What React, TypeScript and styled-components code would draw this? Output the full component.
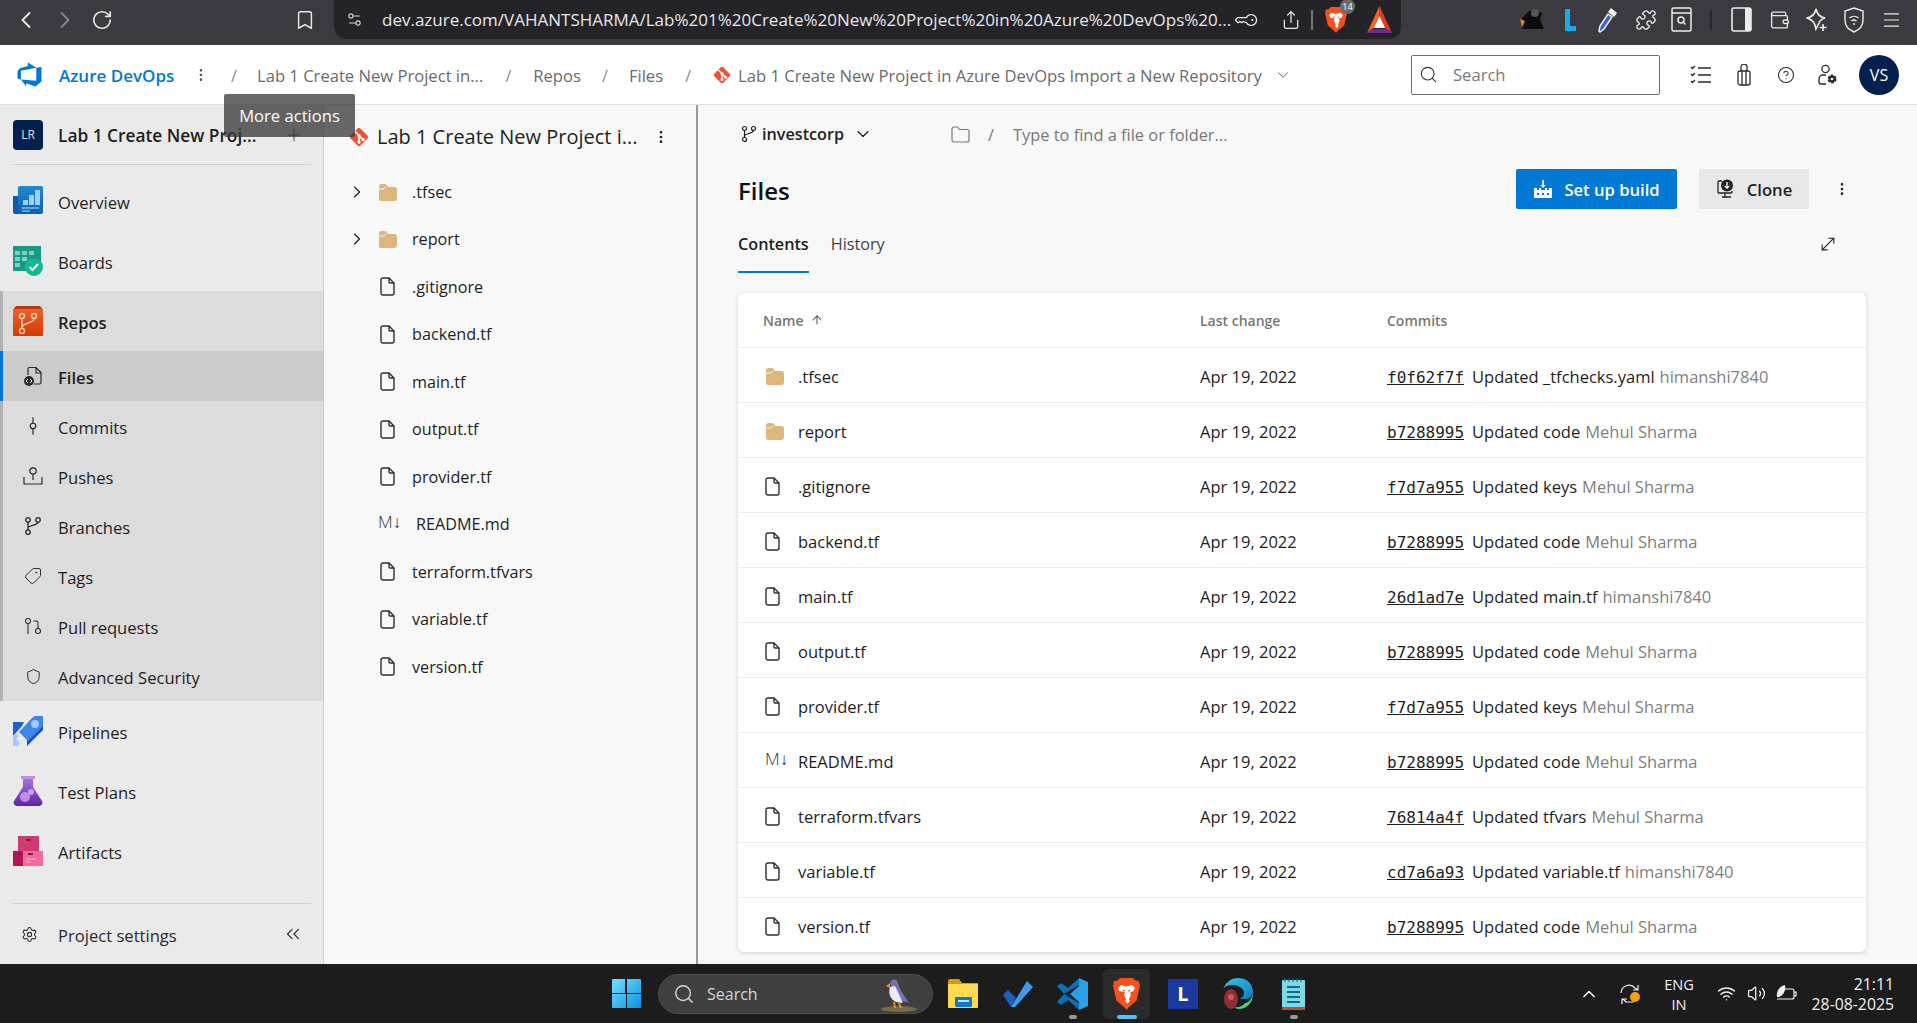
import React from "react";
import styled, { createGlobalStyle } from "styled-components";
import {
  ArrowUp,
  Bookmark,
  ChevronDown,
  ChevronLeft,
  ChevronRight,
  ChevronUp,
  ChevronsLeft,
  CircleHelp,
  EllipsisVertical,
  GitCommitVertical,
  GitPullRequest,
  KeyRound,
  Menu,
  MoveDiagonal,
  Plus,
  Puzzle,
  RotateCw,
  Search,
  Settings,
  Settings2,
  Share,
  Shield,
  Tag,
  Volume2,
  Wallet,
  Wifi,
} from "lucide-react";

const FONT = `"Open Sans", "Noto Sans", "Liberation Sans", sans-serif`;
const TEXT = "16.6px";

const GlobalStyle = createGlobalStyle`
  html, body { margin: 0; padding: 0; background: #fff; }
  body { font-family: ${FONT}; color: #1e1e1e; overflow: hidden; }
  * { box-sizing: border-box; }
`;

const Page = styled.div`
  width: 1917px;
  height: 1023px;
  display: flex;
  flex-direction: column;
  overflow: hidden;
  position: relative;
`;

/* browser chrome */
const BrowserBar = styled.div`
  height: 45px;
  flex: none;
  background: #3a3a40;
  display: flex;
  align-items: flex-start;
  color: #e4e4e6;
`;
const ChromeSlot = styled.div<{ $w: number; $dim?: boolean; $ml?: number }>`
  width: ${(p) => p.$w}px;
  height: 39px;
  flex: none;
  margin-left: ${(p) => p.$ml ?? 0}px;
  display: flex;
  align-items: center;
  justify-content: center;
  color: ${(p) => (p.$dim ? "#85858a" : "#e8e8ea")};
`;
const UrlPill = styled.div`
  width: 1067px;
  height: 39px;
  margin-left: 12px;
  flex: none;
  background: #232328;
  border-radius: 0 0 12px 12px;
  display: flex;
  align-items: center;
  padding-left: 12px;
`;
const UrlText = styled.div`
  width: 854px;
  margin-left: 19px;
  font-size: 17px;
  white-space: nowrap;
  overflow: hidden;
  color: #e8e8ea;
`;
const ChromeSep = styled.div<{ $ml: number; $mr: number; $dark?: boolean }>`
  width: 2px;
  height: 20px;
  margin: 0 ${(p) => p.$mr}px 0 ${(p) => p.$ml}px;
  align-self: center;
  background: ${(p) => (p.$dark ? "#27272b" : "#77777c")};
  flex: none;
`;
const ChromeSepTop = styled(ChromeSep)`
  margin-top: 10px;
  align-self: flex-start;
`;
const ExtBadge = styled.span`
  position: absolute;
  top: -6px;
  right: -8px;
  width: 15px;
  height: 15px;
  border-radius: 50%;
  background: #6a6a72;
  color: #fff;
  font-size: 9px;
  line-height: 15px;
  text-align: center;
`;
const BraveWrap = styled.div`
  position: relative;
  display: flex;
  margin-left: 3px;
`;
const TiltedKey = styled(KeyRound)`
  transform: rotate(45deg);
`;

/* azure devops header */
const Header = styled.div`
  height: 60px;
  flex: none;
  background: #fff;
  border-bottom: 1px solid #e2e2e2;
  display: flex;
  align-items: center;
  padding-left: 16px;
  position: relative;
`;
const Brand = styled.span`
  color: #0078d4;
  font-weight: 600;
  font-size: 17px;
  margin-left: 16px;
  width: 129px;
  padding-top: 2px;
  white-space: nowrap;
`;
const Crumb = styled.span<{ $ml?: number }>`
  color: #6b6b6b;
  font-size: ${TEXT};
  margin-left: ${(p) => p.$ml ?? 0}px;
  padding-top: 2px;
  white-space: nowrap;
`;
const CrumbSlash = styled.span<{ $w: number; $ml?: number }>`
  width: ${(p) => p.$w}px;
  margin-left: ${(p) => p.$ml ?? 0}px;
  color: #8a8a8a;
  font-size: 16px;
  padding-top: 2px;
  text-align: center;
  flex: none;
`;
const SearchBox = styled.div`
  width: 249px;
  height: 40px;
  margin-left: auto;
  border: 1px solid #6e6e6e;
  border-radius: 2px;
  display: flex;
  align-items: center;
  padding-left: 7px;
  gap: 15px;
  color: #7a7a7a;
  font-size: ${TEXT};
`;
const HeaderTools = styled.div`
  display: flex;
  align-items: center;
  margin-left: 19px;
  margin-right: 18px;
  color: #2a2a2a;
`;
const ToolSlot = styled.div<{ $w: number; $ml?: number; $color?: string }>`
  width: ${(p) => p.$w}px;
  margin-left: ${(p) => p.$ml ?? 0}px;
  color: ${(p) => p.$color ?? "inherit"};
  display: flex;
  justify-content: center;
`;
const Avatar = styled.div`
  width: 40px;
  height: 40px;
  border-radius: 50%;
  background: #03204f;
  color: #fff;
  font-size: 16px;
  display: flex;
  align-items: center;
  justify-content: center;
  margin-left: 10px;
`;
const Tooltip = styled.div`
  position: absolute;
  left: 224px;
  top: 49px;
  width: 131px;
  height: 43px;
  background: rgba(55, 55, 55, 0.76);
  border-radius: 2px;
  color: #fff;
  font-size: ${TEXT};
  display: flex;
  align-items: center;
  justify-content: center;
  z-index: 5;
`;

/* main columns */
const Body = styled.div`
  flex: 1;
  min-height: 0;
  display: flex;
`;
const Sidebar = styled.nav`
  width: 324px;
  flex: none;
  background: #eaeaea;
  border-right: 1px solid #cfcfcf;
  display: flex;
  flex-direction: column;
`;
const ProjectHead = styled.div`
  height: 60px;
  margin: 0 12px;
  border-bottom: 1px solid #d2d2d2;
  display: flex;
  align-items: center;
  flex: none;
`;
const ProjectBadge = styled.div`
  width: 30px;
  height: 30px;
  margin-left: 1px;
  border-radius: 4px;
  background: #03204f;
  color: #dfe6f0;
  font-size: 12px;
  display: flex;
  align-items: center;
  justify-content: center;
`;
const ProjectName = styled.div`
  margin-left: 15px;
  padding-top: 2px;
  font-weight: 600;
  font-size: 17.3px;
  width: 226px;
  white-space: nowrap;
`;
const PlusSlot = styled.div`
  display: flex;
  color: #555;
`;
const NavList = styled.div`
  padding-top: 6px;
`;
const NavRow = styled.div<{ $bold?: boolean }>`
  height: 60px;
  display: flex;
  align-items: center;
  padding-left: 13px;
  gap: 15px;
  font-size: ${TEXT};
  font-weight: ${(p) => (p.$bold ? 600 : 400)};
`;
const NavLabel = styled.span`
  padding-top: 3px;
`;
const RepoSection = styled.div`
  background: #dcdcdc;
  border-left: 3px solid #b2b2b2;
`;
const RepoHead = styled(NavRow)`
  padding-left: 10px;
`;
const SubRow = styled.div<{ $active?: boolean }>`
  height: 50px;
  margin-left: ${(p) => (p.$active ? -3 : 0)}px;
  display: flex;
  align-items: center;
  font-size: ${TEXT};
  font-weight: ${(p) => (p.$active ? 600 : 400)};
  background: ${(p) => (p.$active ? "#cccccc" : "transparent")};
  border-left: ${(p) => (p.$active ? "3px solid #0078d4" : "none")};
`;
const SubIcon = styled.div`
  width: 55px;
  padding-left: 10px;
  padding-right: 5px;
  flex: none;
  display: flex;
  justify-content: center;
  color: #2a2a2a;
`;
const FlippedTag = styled(Tag)`
  transform: scaleX(-1);
`;
const SettingsWrap = styled.div`
  margin: auto 12px 0;
  height: 61px;
  border-top: 1px solid #d2d2d2;
  display: flex;
  align-items: center;
  font-size: ${TEXT};
  flex: none;
  color: #2a2a2a;
`;
const SettingsIcon = styled.div`
  width: 46px;
  padding-left: 9px;
  display: flex;
`;
const CollapseIcon = styled.div`
  margin-left: auto;
  margin-right: 7px;
  display: flex;
`;

/* file tree */
const TreePane = styled.div`
  width: 374px;
  flex: none;
  background: #f8f8f8;
  border-right: 2px solid #999;
`;
const TreeTitle = styled.div`
  height: 63px;
  display: flex;
  align-items: center;
  padding-left: 25px;
`;
const TreeTitleText = styled.div`
  margin-left: 8px;
  font-size: 20px;
  width: 276px;
  white-space: nowrap;
`;
const TreeRow = styled.div`
  height: 47.5px;
  display: flex;
  align-items: center;
  font-size: 16.2px;
`;
const TreeChevron = styled.div`
  width: 54px;
  padding-left: 23px;
  display: flex;
  flex: none;
`;
const TreeIcon = styled.div<{ $w?: number; $pl?: number }>`
  width: ${(p) => p.$w ?? 34}px;
  padding-left: ${(p) => p.$pl ?? 0}px;
  flex: none;
  display: flex;
`;
const MdGlyph = styled.span`
  font-size: 17px;
  font-weight: 300;
  line-height: 16px;
  padding-bottom: 4px;
  color: #333;
  white-space: nowrap;
`;

/* right pane */
const Main = styled.main`
  flex: 1;
  min-width: 0;
  background: #f8f8f8;
  padding: 0 51px 0 40px;
`;
const BranchRow = styled.div`
  height: 58px;
  display: flex;
  align-items: center;
  padding-left: 2px;
`;
const BranchName = styled.span`
  font-weight: 600;
  font-size: 16.2px;
  margin-left: 4px;
  width: 91px;
  white-space: nowrap;
`;
const PathBox = styled.div`
  display: flex;
  align-items: center;
  margin-left: 78px;
  color: #777;
  font-size: 16.4px;
`;
const PathSlash = styled.span`
  margin: 0 19px 0 18px;
  color: #777;
`;
const TitleRow = styled.div`
  height: 40px;
  margin-top: 6px;
  display: flex;
  align-items: center;
`;
const PageTitle = styled.h1`
  margin: 0;
  padding-top: 3px;
  font-size: 24px;
  font-weight: 600;
  color: #111;
`;
const PrimaryButton = styled.button`
  margin-left: auto;
  width: 161px;
  height: 40px;
  border: none;
  border-radius: 2px;
  background: #0078d4;
  color: #fff;
  font-family: ${FONT};
  font-weight: 600;
  font-size: ${TEXT};
  display: flex;
  align-items: center;
  justify-content: center;
  gap: 11px;
`;
const SecondaryButton = styled.button`
  margin-left: 22px;
  width: 110px;
  height: 40px;
  border: none;
  border-radius: 2px;
  background: #e8e8e8;
  color: #222;
  font-family: ${FONT};
  font-weight: 600;
  font-size: ${TEXT};
  display: flex;
  align-items: center;
  justify-content: center;
  gap: 11px;
`;
const KebabSlot = styled.div`
  width: 57px;
  padding-left: 25px;
  display: flex;
  color: #222;
`;
const Tabs = styled.div`
  height: 46px;
  margin-top: 18px;
  display: flex;
  align-items: flex-start;
  font-size: 16.2px;
`;
const TabItem = styled.div<{ $active?: boolean }>`
  height: 46px;
  padding-top: 6px;
  margin-right: 22px;
  font-weight: ${(p) => (p.$active ? 600 : 400)};
  color: ${(p) => (p.$active ? "#1e1e1e" : "#444")};
  border-bottom: 2px solid ${(p) => (p.$active ? "#0078d4" : "transparent")};
`;
const ExpandSlot = styled.div`
  margin-left: auto;
  margin-right: 28px;
  margin-top: 7px;
  display: flex;
  color: #222;
`;
const Card = styled.div`
  margin-top: 20px;
  background: #fff;
  border-radius: 6px;
  box-shadow: 0 1px 4px rgba(0, 0, 0, 0.16);
`;
const CardRow = styled.div<{ $head?: boolean }>`
  height: ${(p) => (p.$head ? 54 : 55)}px;
  display: grid;
  grid-template-columns: 437px 187px 1fr;
  align-items: center;
  padding-left: 25px;
  padding-top: ${(p) => (p.$head ? 0 : 2)}px;
  border-top: ${(p) => (p.$head ? "none" : "1px solid #ededed")};
  font-size: ${(p) => (p.$head ? "14px" : "16.5px")};
  font-weight: ${(p) => (p.$head ? 600 : 400)};
  color: ${(p) => (p.$head ? "#777" : "#1e1e1e")};
`;
const NameCell = styled.div`
  display: flex;
  align-items: center;
`;
const RowIcon = styled.div`
  width: 35px;
  flex: none;
  display: flex;
  padding-left: 2px;
`;
const SortArrow = styled.span`
  display: flex;
  margin-left: 6px;
  color: #555;
`;
const CommitCell = styled.div`
  display: flex;
  align-items: baseline;
  white-space: nowrap;
`;
const CommitHash = styled.span`
  font-family: "DejaVu Sans Mono", "Liberation Mono", monospace;
  font-size: 16px;
  text-decoration: underline;
  margin-right: 8px;
`;
const CommitAuthor = styled.span`
  color: #808080;
  margin-left: 5px;
`;

/* taskbar */
const Taskbar = styled.div`
  height: 59px;
  flex: none;
  background: #1c1c1c;
  display: flex;
  align-items: center;
  padding-left: 612px;
  color: #fff;
`;
const TaskSearch = styled.div`
  width: 275px;
  height: 40px;
  margin-left: 17px;
  margin-right: 15px;
  border-radius: 20px;
  background: #3f3f3f;
  border: 1px solid #4c4c4c;
  display: flex;
  align-items: center;
  padding-left: 14px;
  gap: 12px;
  color: #d6d6d6;
  font-size: 16px;
  position: relative;
`;
const PuffinSlot = styled.div`
  position: absolute;
  right: 12px;
  top: 3px;
  display: flex;
`;
const TaskSlot = styled.div<{ $w: number; $ml?: number; $active?: boolean; $dot?: boolean }>`
  width: ${(p) => p.$w}px;
  margin-left: ${(p) => p.$ml ?? 0}px;
  height: 50px;
  flex: none;
  display: flex;
  align-items: center;
  justify-content: center;
  position: relative;
  border-radius: 5px;
  background: ${(p) => (p.$active ? "#2a2a2a" : "transparent")};
  &::after {
    content: "";
    display: ${(p) => (p.$dot || p.$active ? "block" : "none")};
    position: absolute;
    bottom: 0;
    left: 50%;
    transform: translateX(-50%);
    width: ${(p) => (p.$active ? 20 : 8)}px;
    height: 4px;
    border-radius: 2px;
    background: ${(p) => (p.$active ? "#4cc2ff" : "#9a9a9a")};
  }
`;
const Tray = styled.div`
  margin-left: auto;
  margin-right: 23px;
  display: flex;
  align-items: center;
  color: #f2f2f2;
`;
const TrayLang = styled.div`
  width: 30px;
  margin: 0 22px 0 23px;
  text-align: center;
  font-size: 14.6px;
  line-height: 20px;
`;
const TrayClock = styled.div`
  width: 97px;
  text-align: right;
  font-size: 15.8px;
  line-height: 20px;
`;
const TrayIcon = styled.div<{ $w: number; $ml?: number }>`
  width: ${(p) => p.$w}px;
  margin-left: ${(p) => p.$ml ?? 0}px;
  display: flex;
  justify-content: center;
`;
const LBlue = styled.div`
  width: 30px;
  height: 30px;
  background: #1b3aa0;
  color: #fff;
  font-weight: 700;
  font-size: 20px;
  display: flex;
  align-items: center;
  justify-content: center;
`;

/* inline drawings */
const AzureLogo = () => (
  <svg width="27" height="27" viewBox="0 0 18 18">
    <path fill="#0078d4" d="M17 4v9.74l-4 3.28-6.2-2.26V17L3.29 12.41l10.23.8V4.44zm-3.41.49L7.85 1v2.29L2.58 4.84 1 6.87v4.61l2.26 1V6.57z" />
  </svg>
);
const GitMark = ({ size = 18 }: { size?: number }) => (
  <svg width={size} height={size} viewBox="0 0 20 20">
    <rect x="3" y="3" width="14" height="14" rx="2" transform="rotate(45 10 10)" fill="#f05133" />
    <path d="M6 4.5 14 12.5M10 8.5v6" stroke="#fff" strokeWidth="1.5" fill="none" />
    <circle cx="10" cy="15" r="1.7" fill="#fff" />
    <circle cx="10" cy="8.4" r="1.7" fill="#fff" />
    <circle cx="14" cy="12.5" r="1.7" fill="#fff" />
  </svg>
);
const FolderIcon = () => (
  <svg width="19" height="18" viewBox="0 0 19 18">
    <path fill="#dcb67a" d="M1 4a3 3 0 0 1 3-3h2.5a3 3 0 0 1 2.4 1.2L10 4H16a3 3 0 0 1 3 3v8a3 3 0 0 1-3 3H3a2 2 0 0 1-2-2z" />
    <path d="M1 6h4.5L8 3.8" stroke="#f8f8f8" strokeWidth="1" fill="none" />
  </svg>
);
const FileIcon = () => (
  <svg width="15" height="19" viewBox="0 0 15 19" fill="none" stroke="#2e2e2e" strokeWidth="1.4">
    <path d="M3 1h6l5 5v10a2 2 0 0 1-2 2H3a2 2 0 0 1-2-2V3a2 2 0 0 1 2-2z" />
    <path d="M9 1v4a1 1 0 0 0 1 1h4" />
  </svg>
);
const BranchGlyph = ({ size = 18 }: { size?: number }) => (
  <svg width={size} height={size} viewBox="0 0 18 18" fill="none" stroke="currentColor" strokeWidth="1.2">
    <circle cx="4.5" cy="3.5" r="2" />
    <circle cx="13.5" cy="3.5" r="2" />
    <circle cx="4.5" cy="14.5" r="2" />
    <path d="M4.5 5.5v7M13.5 5.5c0 3.5-9 2.5-9 5.5" />
  </svg>
);
const OverviewIcon = () => (
  <svg width="30" height="30" viewBox="0 0 30 30">
    <defs>
      <linearGradient id="ov" x1="0" y1="0" x2="0" y2="1">
        <stop offset="0" stopColor="#1f8ad6" />
        <stop offset="1" stopColor="#0f5db0" />
      </linearGradient>
    </defs>
    <path fill="#0e5aa8" d="M0 10h6v18H2a2 2 0 0 1-2-2z" />
    <rect x="5" y="0" width="25" height="28" rx="2" fill="url(#ov)" />
    <path fill="#9fd0f2" d="M10 14h5v5h-5zM16 9h5v10h-5zM22 4h5v15h-5z" />
    <path stroke="#7fb9e6" strokeWidth="1.5" d="M9 22h17M9 25h8" />
  </svg>
);
const BoardsIcon = () => (
  <svg width="30" height="30" viewBox="0 0 30 30">
    <rect x="0" y="0" width="28" height="25" fill="#1a9a86" />
    <path fill="#8fdccb" d="M2 5h5v4H2zM9 5h5v4H9zM16 5h5v4h-5zM2 11h5v4H2zM9 11h5v4H9zM2 17h5v4H2z" opacity=".85" />
    <circle cx="21" cy="21" r="9" fill="#10b990" />
    <path d="M16.5 21l3 3 5.5-6" stroke="#fff" strokeWidth="2" fill="none" />
  </svg>
);
const ReposIcon = () => (
  <svg width="30" height="30" viewBox="0 0 30 30">
    <defs>
      <linearGradient id="rp" x1="0" y1="0" x2="0" y2="1">
        <stop offset="0" stopColor="#e8622a" />
        <stop offset="1" stopColor="#d63b00" />
      </linearGradient>
    </defs>
    <path fill="#b83a10" d="M3 0h24l3 4H0z" />
    <rect x="0" y="3" width="30" height="27" rx="1" fill="url(#rp)" />
    <g fill="none" stroke="#ffc9b0" strokeWidth="1.5">
      <circle cx="9" cy="10" r="2.5" />
      <circle cx="21" cy="10" r="2.5" />
      <circle cx="9" cy="25" r="2.5" />
      <path d="M9 12.5v10M21 12.5c0 5-12 4-12 9" />
    </g>
  </svg>
);
const PipelinesIcon = () => (
  <svg width="30" height="30" viewBox="0 0 30 30">
    <path fill="#1a5fd0" d="M0 6h11l-2 4L0 20z" />
    <path fill="#1650c4" d="M14 30l16-16V4l-8 6-8 12z" />
    <path fill="#3f86ea" d="M30 0v10L15 25l-9-9L19 2a6 6 0 0 1 4-2z" />
    <circle cx="22" cy="8" r="4" fill="#a4c8f8" />
    <path fill="#a4c8f8" d="M0 20l3-3 3 3-3 3 4 4-2 3H0z" />
  </svg>
);
const TestPlansIcon = () => (
  <svg width="30" height="30" viewBox="0 0 30 30">
    <defs>
      <linearGradient id="tp" x1="0" y1="0" x2="0" y2="1">
        <stop offset="0" stopColor="#a374dc" />
        <stop offset="1" stopColor="#5f22a8" />
      </linearGradient>
    </defs>
    <rect x="8" y="0" width="14" height="3" fill="#b891e6" />
    <path fill="url(#tp)" d="M10 3h10v8l9 14a3.4 3.4 0 0 1-3 5H4a3.4 3.4 0 0 1-3-5l9-14z" />
    <circle cx="12" cy="21" r="5" fill="#c7a8ee" opacity=".8" />
    <circle cx="18" cy="16" r="3" fill="#d9c4f3" opacity=".7" />
  </svg>
);
const ArtifactsIcon = () => (
  <svg width="30" height="30" viewBox="0 0 30 30">
    <rect x="5" y="0" width="21" height="16" fill="#cf3a72" />
    <rect x="0" y="15" width="11" height="15" fill="#b31656" />
    <rect x="10" y="15" width="20" height="15" fill="#ef6b9c" />
    <path fill="#8f1a4a" d="M13 3h5v2h-5zM5 17h4v2H5zM15 17h5v2h-5z" />
    <path stroke="#f9b4cd" strokeWidth="1.2" d="M13 23h10M13 26h5" />
  </svg>
);
const FilesNavIcon = () => (
  <svg width="20" height="20" viewBox="0 0 20 20" fill="none">
    <path d="M5 9V3a1.5 1.5 0 0 1 1.5-1.5H13l5 5v10a1.5 1.5 0 0 1-1.5 1.5H11M13 1.5V7h5" stroke="#2a2a2a" strokeWidth="1.2" />
    <circle cx="6" cy="15" r="5" fill="#2a2a2a" />
    <path d="M5 13l-2 2 2 2M7 13l2 2-2 2" stroke="#fff" strokeWidth="1" />
  </svg>
);
const PushIcon = () => (
  <svg width="20" height="18" viewBox="0 0 20 18" fill="none" stroke="#2a2a2a" strokeWidth="1.2">
    <circle cx="10" cy="4" r="3.2" />
    <path d="M10 7.2V13M1 10v7h18v-7" />
  </svg>
);
const BuildIcon = () => (
  <svg width="20" height="20" viewBox="0 0 20 20" fill="#fff">
    <path d="M1 9h3v2h2V9h2v2h4V9h2v2h2V9h3v10H1z" />
    <path d="M9.2 1h1.6v5h2L10 9 7.2 6h2z" />
    <path fill="#0078d4" d="M4 14h2v2H4zM9 14h2v2H9zM14 14h2v2h-2z" />
  </svg>
);
const CloneIcon = () => (
  <svg width="20" height="20" viewBox="0 0 20 20" fill="none" stroke="#222" strokeWidth="1.3">
    <path d="M6 2H3a1 1 0 0 0-1 1v10a1 1 0 0 0 1 1h12a1 1 0 0 0 1-1v-1M6 18h9M9 14v4" />
    <circle cx="11" cy="6.5" r="6" fill="#222" stroke="none" />
    <path d="M11 3v6M8.8 7 11 9.2 13.2 7" stroke="#fff" />
  </svg>
);
const ChecklistIcon = () => (
  <svg width="21" height="20" viewBox="0 0 21 20" fill="none" stroke="#2a2a2a" strokeWidth="1.3">
    <path d="M8 3h13M8 10h13M8 17h13M1 2l1.5 1.5L5 1M1 9l1.5 1.5L5 8M1 16l1.5 1.5L5 15" />
  </svg>
);
const BagIcon = () => (
  <svg width="14" height="22" viewBox="0 0 14 22" fill="none" stroke="#2a2a2a" strokeWidth="1.3">
    <rect x="1" y="7" width="12" height="14" rx="2" />
    <path d="M4 7V3a3 3 0 0 1 6 0v4M5 7v14M9 7v14" />
  </svg>
);
const UserGear = () => (
  <svg width="20" height="22" viewBox="0 0 20 22" fill="none" stroke="#2a2a2a" strokeWidth="1.3">
    <circle cx="7.5" cy="5" r="3.6" />
    <path d="M1 18v-3a4 4 0 0 1 4-4h3M1 18a2 2 0 0 0 2 2h5" />
    <circle cx="14" cy="15" r="3.4" fill="#2a2a2a" strokeWidth="2.2" strokeDasharray="2.4 1.2" />
    <circle cx="14" cy="15" r="1.3" fill="#fff" stroke="none" />
  </svg>
);
const BraveShield = ({ w, h }: { w: number; h: number }) => (
  <svg width={w} height={h} viewBox="0 0 27 32">
    <path fill="#f4511e" d="M7 0h13l2.5 2.4L26 3l1 5-1 4-2.4 10.5L15 30l-1.5 2-1.5-2-8.6-7.5L1 12 0 8l1-5 3.5-.6z" />
    <path fill="#fff" d="M8 7l5.5 1.6L19 7l3 3-1.4 3-3.4 1.2.6 3.3-2 4 1 1.5-2.3 2.8-2.3-2.8 1-1.5-2-4 .6-3.3L6.4 13 5 10z" />
    <path fill="#f4511e" d="M9 11.5l3 .8-1 1.7zM18 11.5l-3 .8 1 1.7z" />
  </svg>
);
const BatTriangle = () => (
  <svg width="25" height="28" viewBox="0 0 25 28">
    <path fill="#e6392e" d="M12.5 0 25 27 17 21l-4.5-9z" />
    <path fill="#f4632a" d="M12.5 0 0 27l8-6 4.5-9z" />
    <path fill="#6d2d8e" d="M0 27h25l-4-4H4z" />
    <path fill="#fff" d="M12.5 10 18 22H7z" />
  </svg>
);
const PanelIcon = () => (
  <svg width="21" height="25" viewBox="0 0 21 25">
    <rect x="1" y="1" width="19" height="23" rx="2" fill="none" stroke="#ececee" strokeWidth="1.6" />
    <rect x="14" y="1" width="6" height="23" fill="#ececee" />
  </svg>
);
const ReaderIcon = () => (
  <svg width="21" height="25" viewBox="0 0 21 25" fill="none" stroke="#ececee" strokeWidth="1.5">
    <rect x="1" y="1" width="19" height="23" rx="1.5" />
    <path d="M1 6h19" />
    <circle cx="10" cy="13" r="3" />
    <path d="m12.5 15.5 2 2" />
  </svg>
);
const DropperIcon = () => (
  <svg width="20" height="26" viewBox="0 0 20 26">
    <path fill="#f2f2f2" d="M13 1l6 5-3 4-6-5z" />
    <path fill="#3b63c9" stroke="#f2f2f2" strokeWidth="1.5" d="M10 7l4 3-8 12-4 3-1-1 1-5z" />
  </svg>
);
const LIcon = () => (
  <svg width="12" height="24" viewBox="0 0 12 24">
    <path fill="#18a8f0" d="M1 1h5v17h6v5H1z" />
  </svg>
);
const DarkExt = () => (
  <svg width="24" height="26" viewBox="0 0 24 26">
    <path fill="#0c0c0c" d="M3 10l6-6 8 0 5 2-2 6 4 10H2l2-6-4-2z" />
    <path fill="#e68a18" d="M0 12l5 2-3 6z" />
    <circle cx="15" cy="6" r="4" fill="#555" />
  </svg>
);
const SparkPlus = () => (
  <svg width="22" height="26" viewBox="0 0 22 26" fill="none" stroke="#ececee" strokeWidth="1.6">
    <path d="M10 2c1 5 3 8 9 9-3 1-5 2-6 5l-3 6c-1-6-3-9-9-11 5-1 8-4 9-9z" />
    <path d="M17 17v7M13.5 20.5h7" />
  </svg>
);
const VpnShield = () => (
  <svg width="20" height="26" viewBox="0 0 20 26" fill="none" stroke="#ececee" strokeWidth="1.4">
    <path d="M10 1l9 3v9c0 6-4 10-9 12-5-2-9-6-9-12V4z" />
    <path d="M5.5 11a7 7 0 0 1 9 0M7.5 14a4 4 0 0 1 5 0" />
    <circle cx="10" cy="17" r="1" fill="#ececee" stroke="none" />
  </svg>
);
const WinLogo = () => (
  <svg width="29" height="29" viewBox="0 0 29 29">
    <defs>
      <linearGradient id="wn" x1="0" y1="0" x2="1" y2="1">
        <stop offset="0" stopColor="#74e2ff" />
        <stop offset="1" stopColor="#0c8fe8" />
      </linearGradient>
    </defs>
    <path fill="url(#wn)" d="M1 0h12v14H0V1a1 1 0 0 1 1-1zM15 0h13a1 1 0 0 1 1 1v13H15zM0 15h14v14H1a1 1 0 0 1-1-1zM15 15h14v13a1 1 0 0 1-1 1H15z" />
  </svg>
);
const Puffin = () => (
  <svg width="42" height="34" viewBox="0 0 42 34">
    <ellipse cx="21" cy="31" rx="18" ry="3" fill="#7a6a48" />
    <path fill="#7b6fb5" d="M12 5a4 4 0 0 1 7-2l4 10 8 12-6-2-8-5z" />
    <path fill="#ecebf5" d="M12 9c-2 6 0 12 6 15l7 1-5-11-3-6z" />
    <path fill="#f08a24" d="M8 8l4-3v5zM15 24h2l1 6h-2zM20 25h2l2 5h-2z" />
  </svg>
);
const ExplorerIcon = () => (
  <svg width="30" height="29" viewBox="0 0 30 29">
    <path fill="#d49a16" d="M0 2a2 2 0 0 1 2-2h9l3 4h16v5H0z" />
    <rect x="0" y="5" width="30" height="24" rx="1" fill="#ffd94f" />
    <rect x="7" y="18" width="17" height="10" rx="1" fill="#0f78c9" />
    <rect x="10" y="21" width="11" height="2" fill="#b9e2ff" />
  </svg>
);
const TodoIcon = () => (
  <svg width="30" height="26" viewBox="0 0 30 26">
    <path fill="#1a5fb8" d="M0 14l5-5 8 8-5 9z" />
    <path fill="#3d9bee" d="M8 26 24 0l6 6-18 20z" />
  </svg>
);
const VsCodeIcon = () => (
  <svg width="31" height="32" viewBox="0 0 31 32">
    <path fill="#0a6fb8" d="M22 0v7L7 16l15 9v7L11 22l-7 5-4-3 7-8-7-8 4-3 7 5z" />
    <path fill="#2aa0ea" d="M22 0l9 4v24l-9 4zM22 8l-9 8 9 8z" fillRule="evenodd" />
  </svg>
);
const EdgeIcon = () => (
  <svg width="30" height="31" viewBox="0 0 30 31">
    <defs>
      <linearGradient id="eg" x1="0" y1="0" x2="1" y2="1">
        <stop offset="0" stopColor="#36c5e8" />
        <stop offset="1" stopColor="#0f7ac0" />
      </linearGradient>
    </defs>
    <path fill="url(#eg)" d="M15 0c9 0 15 6 15 14 0 5-4 7-8 7h-5c2-1 4-3 4-6 0-5-6-8-12-8C3 7 0 10 0 13 1 6 7 0 15 0z" />
    <path fill="#45d07b" d="M30 16c0 9-7 15-14 15-2 0-4-1-5-2 4 1 9-1 11-4 3 0 6-3 8-9z" />
    <ellipse cx="8" cy="21" rx="7" ry="10" fill="#8a2f3a" />
    <circle cx="8" cy="19" r="3" fill="#d9534f" />
  </svg>
);
const NotepadIcon = () => (
  <svg width="23" height="32" viewBox="0 0 23 32">
    <rect x="0" y="2" width="23" height="28" rx="1" fill="#7fd8e8" />
    <path stroke="#0e5c7a" strokeWidth="1" d="M3 0v4M7 0v4M11 0v4M15 0v4M19 0v4" />
    <path stroke="#0e6a8a" strokeWidth="2" d="M5 9h13M5 14h13M5 19h13M5 24h13" />
    <rect x="0" y="29" width="23" height="3" fill="#b5532a" />
  </svg>
);
const SyncIcon = () => (
  <svg width="22" height="22" viewBox="0 0 22 22" fill="none" stroke="#f2f2f2" strokeWidth="1.2">
    <path d="M2 10a8 8 0 0 1 14-5l3 2M19 2v5h-5M15 19H7l-3-3M3 21v-5h5" />
    <circle cx="16" cy="14" r="5" fill="#f5a10c" stroke="none" />
  </svg>
);
const BatteryIcon = () => (
  <svg width="21" height="20" viewBox="0 0 21 20" fill="none" stroke="#f2f2f2" strokeWidth="1.2">
    <path d="M5 5h11a2 2 0 0 1 2 2v6a2 2 0 0 1-2 2H1M18 8h2v4h-2" />
    <path fill="#f2f2f2" stroke="none" d="M1 13C0 7 4 2 9 1c1 5-1 10-6 12z" />
  </svg>
);

const tree: { name: string; kind: "folder" | "file" | "md" }[] = [
  { name: ".tfsec", kind: "folder" },
  { name: "report", kind: "folder" },
  { name: ".gitignore", kind: "file" },
  { name: "backend.tf", kind: "file" },
  { name: "main.tf", kind: "file" },
  { name: "output.tf", kind: "file" },
  { name: "provider.tf", kind: "file" },
  { name: "README.md", kind: "md" },
  { name: "terraform.tfvars", kind: "file" },
  { name: "variable.tf", kind: "file" },
  { name: "version.tf", kind: "file" },
];

const commits = [
  { hash: "f0f62f7f", msg: "Updated _tfchecks.yaml", by: "himanshi7840" },
  { hash: "b7288995", msg: "Updated code", by: "Mehul Sharma" },
  { hash: "f7d7a955", msg: "Updated keys", by: "Mehul Sharma" },
  { hash: "b7288995", msg: "Updated code", by: "Mehul Sharma" },
  { hash: "26d1ad7e", msg: "Updated main.tf", by: "himanshi7840" },
  { hash: "b7288995", msg: "Updated code", by: "Mehul Sharma" },
  { hash: "f7d7a955", msg: "Updated keys", by: "Mehul Sharma" },
  { hash: "b7288995", msg: "Updated code", by: "Mehul Sharma" },
  { hash: "76814a4f", msg: "Updated tfvars", by: "Mehul Sharma" },
  { hash: "cd7a6a93", msg: "Updated variable.tf", by: "himanshi7840" },
  { hash: "b7288995", msg: "Updated code", by: "Mehul Sharma" },
];

const subItems = [
  { label: "Commits", icon: <GitCommitVertical size={22} strokeWidth={1.3} /> },
  { label: "Pushes", icon: <PushIcon /> },
  { label: "Branches", icon: <BranchGlyph size={20} /> },
  { label: "Tags", icon: <FlippedTag size={18} strokeWidth={1.3} /> },
  { label: "Pull requests", icon: <GitPullRequest size={20} strokeWidth={1.3} /> },
  { label: "Advanced Security", icon: <Shield size={17} strokeWidth={1.4} /> },
];

function App() {
  return (
    <Page>
      <GlobalStyle />
      <BrowserBar>
        <ChromeSlot $w={39} $ml={6}>
          <ChevronLeft size={28} strokeWidth={1.6} />
        </ChromeSlot>
        <ChromeSlot $w={39} $dim>
          <ChevronRight size={28} strokeWidth={1.6} />
        </ChromeSlot>
        <ChromeSlot $w={36}>
          <RotateCw size={22} strokeWidth={1.8} />
        </ChromeSlot>
        <ChromeSlot $w={34} $ml={168}>
          <Bookmark size={22} strokeWidth={1.6} />
        </ChromeSlot>
        <UrlPill>
          <Settings2 size={17} strokeWidth={1.6} color="#d0d0d4" />
          <UrlText>dev.azure.com/VAHANTSHARMA/Lab%201%20Create%20New%20Project%20in%20Azure%20DevOps%20...</UrlText>
          <ChromeSlot $w={22}>
            <TiltedKey size={20} strokeWidth={1.6} />
          </ChromeSlot>
          <ChromeSlot $w={22} $ml={22}>
            <Share size={20} strokeWidth={1.5} />
          </ChromeSlot>
          <ChromeSep $ml={9} $mr={9} />
          <BraveWrap>
            <BraveShield w={22} h={30} />
            <ExtBadge>14</ExtBadge>
          </BraveWrap>
          <ChromeSlot $w={25} $ml={20}>
            <BatTriangle />
          </ChromeSlot>
        </UrlPill>
        <ChromeSlot $w={24} $ml={119}><DarkExt /></ChromeSlot>
        <ChromeSlot $w={12} $ml={20}><LIcon /></ChromeSlot>
        <ChromeSlot $w={20} $ml={22}><DropperIcon /></ChromeSlot>
        <ChromeSlot $w={22} $ml={17}><Puzzle size={22} strokeWidth={1.5} /></ChromeSlot>
        <ChromeSlot $w={21} $ml={14}><ReaderIcon /></ChromeSlot>
        <ChromeSepTop $ml={18} $mr={0} $dark />
        <ChromeSlot $w={21} $ml={19}><PanelIcon /></ChromeSlot>
        <ChromeSlot $w={21} $ml={17}><Wallet size={22} strokeWidth={1.5} /></ChromeSlot>
        <ChromeSlot $w={22} $ml={16}><SparkPlus /></ChromeSlot>
        <ChromeSlot $w={20} $ml={16}><VpnShield /></ChromeSlot>
        <ChromeSlot $w={21} $ml={17}><Menu size={24} strokeWidth={1.4} /></ChromeSlot>
      </BrowserBar>

      <Header>
        <AzureLogo />
        <Brand>Azure DevOps</Brand>
        <ToolSlot $w={25} $color="#555">
          <EllipsisVertical size={16} />
        </ToolSlot>
        <CrumbSlash $w={20} $ml={11}>/</CrumbSlash>
        <Crumb $ml={13}>Lab 1 Create New Project in...</Crumb>
        <CrumbSlash $w={50}>/</CrumbSlash>
        <Crumb>Repos</Crumb>
        <CrumbSlash $w={48}>/</CrumbSlash>
        <Crumb>Files</Crumb>
        <CrumbSlash $w={50}>/</CrumbSlash>
        <GitMark size={18} />
        <Crumb $ml={7}>Lab 1 Create New Project in Azure DevOps Import a New Repository</Crumb>
        <ToolSlot $w={18} $ml={12} $color="#666">
          <ChevronDown size={20} strokeWidth={1.3} />
        </ToolSlot>
        <SearchBox>
          <Search size={19} strokeWidth={1.4} color="#333" />
          Search
        </SearchBox>
        <HeaderTools>
          <ToolSlot $w={42}><ChecklistIcon /></ToolSlot>
          <ToolSlot $w={42} $ml={2}><BagIcon /></ToolSlot>
          <ToolSlot $w={42}><CircleHelp size={18} strokeWidth={1.4} /></ToolSlot>
          <ToolSlot $w={42}><UserGear /></ToolSlot>
          <Avatar>VS</Avatar>
        </HeaderTools>
        <Tooltip>More actions</Tooltip>
      </Header>

      <Body>
        <Sidebar>
          <ProjectHead>
            <ProjectBadge>LR</ProjectBadge>
            <ProjectName>Lab 1 Create New Proj...</ProjectName>
            <PlusSlot><Plus size={20} strokeWidth={1.3} /></PlusSlot>
          </ProjectHead>
          <NavList>
            <NavRow><OverviewIcon /><NavLabel>Overview</NavLabel></NavRow>
            <NavRow><BoardsIcon /><NavLabel>Boards</NavLabel></NavRow>
            <RepoSection>
              <RepoHead $bold><ReposIcon /><NavLabel>Repos</NavLabel></RepoHead>
              <SubRow $active>
                <SubIcon><FilesNavIcon /></SubIcon>
                <NavLabel>Files</NavLabel>
              </SubRow>
              {subItems.map((item) => (
                <SubRow key={item.label}>
                  <SubIcon>{item.icon}</SubIcon>
                  <NavLabel>{item.label}</NavLabel>
                </SubRow>
              ))}
            </RepoSection>
            <NavRow><PipelinesIcon /><NavLabel>Pipelines</NavLabel></NavRow>
            <NavRow><TestPlansIcon /><NavLabel>Test Plans</NavLabel></NavRow>
            <NavRow><ArtifactsIcon /><NavLabel>Artifacts</NavLabel></NavRow>
          </NavList>
          <SettingsWrap>
            <SettingsIcon><Settings size={17} strokeWidth={1.5} /></SettingsIcon>
            <NavLabel>Project settings</NavLabel>
            <CollapseIcon><ChevronsLeft size={22} strokeWidth={1.2} /></CollapseIcon>
          </SettingsWrap>
        </Sidebar>

        <TreePane>
          <TreeTitle>
            <GitMark size={20} />
            <TreeTitleText>Lab 1 Create New Project i...</TreeTitleText>
            <EllipsisVertical size={16} />
          </TreeTitle>
          {tree.map((f) => (
            <TreeRow key={f.name}>
              <TreeChevron>
                {f.kind === "folder" && <ChevronRight size={20} strokeWidth={1.4} />}
              </TreeChevron>
              {f.kind === "folder" && <TreeIcon><FolderIcon /></TreeIcon>}
              {f.kind === "file" && <TreeIcon $pl={2}><FileIcon /></TreeIcon>}
              {f.kind === "md" && <TreeIcon $w={38}><MdGlyph>M↓</MdGlyph></TreeIcon>}
              {f.name}
            </TreeRow>
          ))}
        </TreePane>

        <Main>
          <BranchRow>
            <BranchGlyph />
            <BranchName>investcorp</BranchName>
            <ChevronDown size={20} strokeWidth={1.4} />
            <PathBox>
              <svg width="19" height="17" viewBox="0 0 19 17" fill="none" stroke="#777" strokeWidth="1.2">
                <path d="M1 3a2 2 0 0 1 2-2h3.5l2 2.5H16a2 2 0 0 1 2 2V14a2 2 0 0 1-2 2H3a2 2 0 0 1-2-2z" />
              </svg>
              <PathSlash>/</PathSlash>
              Type to find a file or folder...
            </PathBox>
          </BranchRow>
          <TitleRow>
            <PageTitle>Files</PageTitle>
            <PrimaryButton><BuildIcon />Set up build</PrimaryButton>
            <SecondaryButton><CloneIcon />Clone</SecondaryButton>
            <KebabSlot><EllipsisVertical size={16} /></KebabSlot>
          </TitleRow>
          <Tabs>
            <TabItem $active>Contents</TabItem>
            <TabItem>History</TabItem>
            <ExpandSlot><MoveDiagonal size={20} strokeWidth={1.3} /></ExpandSlot>
          </Tabs>
          <Card>
            <CardRow $head>
              <NameCell>
                Name
                <SortArrow><ArrowUp size={14} strokeWidth={1.8} /></SortArrow>
              </NameCell>
              <div>Last change</div>
              <div>Commits</div>
            </CardRow>
            {tree.map((f, i) => (
              <CardRow key={f.name}>
                <NameCell>
                  <RowIcon>
                    {f.kind === "folder" && <FolderIcon />}
                    {f.kind === "file" && <FileIcon />}
                    {f.kind === "md" && <MdGlyph>M↓</MdGlyph>}
                  </RowIcon>
                  {f.name}
                </NameCell>
                <div>Apr 19, 2022</div>
                <CommitCell>
                  <CommitHash>{commits[i].hash}</CommitHash>
                  {commits[i].msg}
                  <CommitAuthor>{commits[i].by}</CommitAuthor>
                </CommitCell>
              </CardRow>
            ))}
          </Card>
        </Main>
      </Body>

      <Taskbar>
        <WinLogo />
        <TaskSearch>
          <Search size={22} strokeWidth={1.6} />
          Search
          <PuffinSlot><Puffin /></PuffinSlot>
        </TaskSearch>
        <TaskSlot $w={30}><ExplorerIcon /></TaskSlot>
        <TaskSlot $w={30} $ml={25}><TodoIcon /></TaskSlot>
        <TaskSlot $w={31} $ml={24} $dot><VsCodeIcon /></TaskSlot>
        <TaskSlot $w={47} $ml={15} $active><BraveShield w={27} h={32} /></TaskSlot>
        <TaskSlot $w={30} $ml={18}><LBlue>L</LBlue></TaskSlot>
        <TaskSlot $w={30} $ml={25}><EdgeIcon /></TaskSlot>
        <TaskSlot $w={23} $ml={29} $dot><NotepadIcon /></TaskSlot>
        <Tray>
          <TrayIcon $w={20}><ChevronUp size={20} strokeWidth={2} /></TrayIcon>
          <TrayIcon $w={22} $ml={20}><SyncIcon /></TrayIcon>
          <TrayLang>ENG<br />IN</TrayLang>
          <TrayIcon $w={20}><Wifi size={19} strokeWidth={1.8} /></TrayIcon>
          <TrayIcon $w={20} $ml={10}><Volume2 size={19} strokeWidth={1.6} /></TrayIcon>
          <TrayIcon $w={21} $ml={10}><BatteryIcon /></TrayIcon>
          <TrayClock>21:11<br />28-08-2025</TrayClock>
        </Tray>
      </Taskbar>
    </Page>
  );
}

export default App;
